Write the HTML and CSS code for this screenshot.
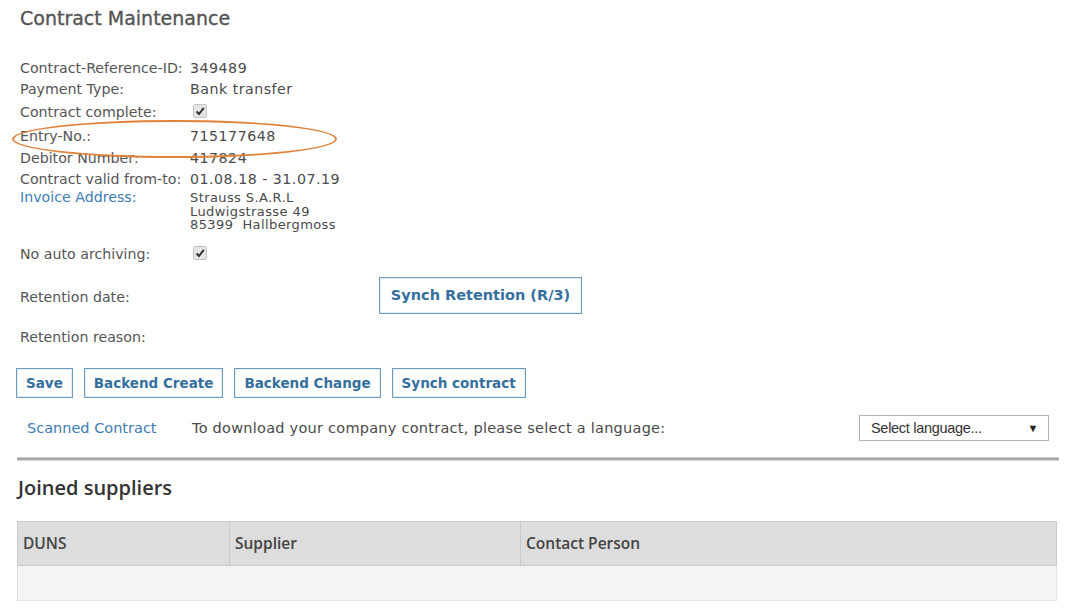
FILE: index.html
```html
<!DOCTYPE html>
<html>
<head>
<meta charset="utf-8">
<link rel="stylesheet" href="styles.css">
</head>
<body>
<div class="page">
  <h1 class="title">Contract Maintenance</h1>
  <div class="form">
    <div class="row r1"><span class="label">Contract-Reference-ID:</span><span class="value">349489</span></div>
    <div class="row r2"><span class="label">Payment Type:</span><span class="value">Bank transfer</span></div>
    <div class="row r3"><span class="label">Contract complete:</span><span class="value"><span class="check"><svg viewBox="0 0 12 12" width="12" height="12"><path d="M2.5 6.5 L5 9 L9.8 2.8" fill="none" stroke="#333" stroke-width="2"/></svg></span></span></div>
    <div class="row r4"><span class="label">Entry-No.:</span><span class="value">715177648</span></div>
    <div class="row r5"><span class="label">Debitor Number:</span><span class="value">417824</span></div>
    <div class="row r6"><span class="label">Contract valid from-to:</span><span class="value">01.08.18 - 31.07.19</span></div>
    <div class="row r7"><span class="label link">Invoice Address:</span><span class="value address">Strauss S.A.R.L<br>Ludwigstrasse 49<br>85399&nbsp; Hallbergmoss</span></div>
    <div class="row r8"><span class="label">No auto archiving:</span><span class="value"><span class="check"><svg viewBox="0 0 12 12" width="12" height="12"><path d="M2.5 6.5 L5 9 L9.8 2.8" fill="none" stroke="#333" stroke-width="2"/></svg></span></span></div>
    <div class="ellipse"></div>
  </div>
  <div class="retention">
    <div class="row rr"><span class="label">Retention date:</span><span class="value spacer"></span><button class="btn btn-big">Synch Retention (R/3)</button></div>
    <div class="row rr"><span class="label">Retention reason:</span></div>
  </div>
  <div class="buttons">
    <button class="btn">Save</button>
    <button class="btn">Backend Create</button>
    <button class="btn">Backend Change</button>
    <button class="btn">Synch contract</button>
  </div>
  <div class="download">
    <span class="scanned link">Scanned Contract</span>
    <span class="dl-text">To download your company contract, please select a language:</span>
    <div class="select"><span>Select language...</span><span class="arrow">▼</span></div>
  </div>
  <div class="divider"></div>
  <h2 class="subtitle">Joined suppliers</h2>
  <table class="suppliers">
    <thead>
      <tr><th class="c1">DUNS</th><th class="c2">Supplier</th><th class="c3">Contact Person</th></tr>
    </thead>
    <tbody>
      <tr><td colspan="3"></td></tr>
    </tbody>
  </table>
</div>
</body>
</html>
```

FILE: styles.css
```css
body {
  margin: 0;
  background: #ffffff;
  font-family: "DejaVu Sans", Verdana, sans-serif;
  font-size: 14.2px;
  color: #555555;
}
.page {
  padding: 0 10px 0 17px;
}
.title {
  margin: 0;
  padding: 8px 0 0 3px;
  font-size: 19px;
  line-height: 20px;
  font-weight: normal;
  color: #555;
  -webkit-text-stroke: 0.35px #555;
}
.form {
  position: relative;
  margin-top: 30px;
  padding-left: 3px;
}
.row {
  display: flex;
  align-items: center;
}
.label {
  width: 170px;
  flex: none;
}
.value {
  color: #4a4a4a;
  letter-spacing: 0.5px;
}
.link {
  color: #3d7db5;
}
.r1 { height: 20px; }
.r2 { height: 21px; }
.r3 { height: 25px; }
.r4 { height: 24px; }
.r5 { height: 20px; }
.r6 { height: 21px; }
.r7 {
  align-items: flex-start;
  padding: 2px 0 10px;
  line-height: 13.5px;
}
.address {
  font-size: 13px;
  letter-spacing: 0.4px;
}
.r8 { height: 25px; }
.check {
  display: inline-flex;
  align-items: center;
  justify-content: center;
  width: 12px;
  height: 12px;
  margin-left: 3px;
  background: #e6e6e6;
  border: 1px solid #c4c4c4;
  border-radius: 2px;
}
.ellipse {
  position: absolute;
  left: -5px;
  top: 62px;
  width: 321px;
  height: 34px;
  border: 2px solid #e0823a;
  border-radius: 50%;
}
.retention {
  margin-top: 10px;
  padding-left: 3px;
}
.rr {
  height: 40px;
  align-items: flex-start;
}
.rr .label {
  line-height: 40px;
}
.spacer {
  width: 189px;
  flex: none;
}
.btn {
  font-family: "DejaVu Sans", Verdana, sans-serif;
  font-weight: bold;
  font-size: 13.5px;
  color: #356f9e;
  background: #ffffff;
  border: 1px solid #6e9cbc;
  box-shadow: inset 0 0 0 1px #e4eef5;
  height: 30px;
  padding: 0 9px;
  margin: 0;
}
.btn-big {
  height: 37px;
  width: 203px;
  padding: 0;
  font-size: 14.5px;
}
.buttons {
  display: flex;
  gap: 11px;
  margin-top: 11px;
  margin-left: -1px;
}
.download {
  display: flex;
  align-items: center;
  height: 26px;
  margin-top: 17px;
  font-size: 14.5px;
}
.scanned {
  width: 165px;
  padding-left: 10px;
  flex: none;
}
.dl-text {
  color: #4a4a4a;
  letter-spacing: 0.25px;
}
.select {
  margin-left: auto;
  margin-right: 10px;
  width: 190px;
  height: 26px;
  box-sizing: border-box;
  border: 1px solid #b4b4b4;
  display: flex;
  align-items: center;
  justify-content: space-between;
  padding: 0 10px 0 11px;
  font-family: "Liberation Sans", Arial, sans-serif;
  font-size: 14.5px;
  letter-spacing: -0.3px;
  color: #333;
}
.arrow {
  font-size: 11px;
  color: #222;
}
.divider {
  margin-top: 16px;
  height: 2px;
  background: #a9a9a9;
  border-top: 1px solid #c9c9c9;
  border-bottom: 1px solid #d6d6d6;
}
.subtitle {
  margin: 15px 0 0 1px;
  font-family: "Open Sans", sans-serif;
  font-weight: 600;
  font-size: 20px;
  line-height: 24px;
  color: #333;
}
.suppliers {
  margin-top: 21px;
  width: 1040px;
  border-collapse: collapse;
  font-family: "Open Sans", sans-serif;
}
.suppliers th {
  height: 44px;
  box-sizing: border-box;
  background: #dddddd;
  border: 1px solid #c9c9c9;
  text-align: left;
  padding: 0 0 0 5px;
  font-size: 15.5px;
  font-weight: 600;
  color: #444;
}
.suppliers .c1 { width: 212px; }
.suppliers .c2 { width: 291px; }
.suppliers td {
  height: 35px;
  box-sizing: border-box;
  background: #f4f4f4;
  border: 1px solid #e3e3e3;
  border-top: 1px solid #cfcfcf;
}
```
